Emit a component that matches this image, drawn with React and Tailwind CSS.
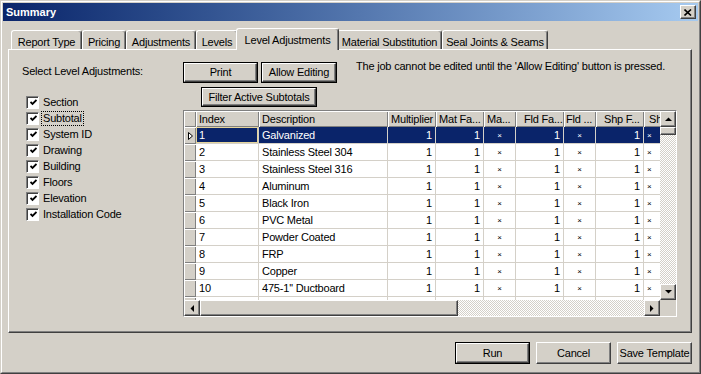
import React from "react";

const raised =
  "border border-t-white border-l-white border-r-[#404040] border-b-[#404040] shadow-[inset_-1px_-1px_0_0_#808080]";
const dither =
  "bg-[repeating-conic-gradient(#ffffff_0%_25%,#d4d0c8_0%_50%)] bg-[length:2px_2px]";

const tabs = [
  { label: "Report Type", w: "w-[71px]" },
  { label: "Pricing", w: "w-[44px]" },
  { label: "Adjustments", w: "w-[70px]" },
  { label: "Levels", w: "w-[42px]" },
  { label: "Level Adjustments", w: "w-[103px]", active: true },
  { label: "Material Substitution", w: "w-[105px]" },
  { label: "Seal Joints & Seams", w: "w-[106px]" },
];

const levels = ["Section", "Subtotal", "System ID", "Drawing", "Building", "Floors", "Elevation", "Installation Code"];

const cols = [
  { label: "Index", w: "w-[63px]", head: "pl-[3px]", cell: "justify-start pl-[3px]" },
  { label: "Description", w: "w-[129px]", head: "pl-[3px]", cell: "justify-start pl-[3px]" },
  { label: "Multiplier", w: "w-[48px]", head: "pl-[3px]", cell: "justify-end pr-[3px]" },
  { label: "Mat Fa...", w: "w-[48px]", head: "pl-[3px]", cell: "justify-end pr-[3px]" },
  { label: "Ma...", w: "w-[32px]", head: "pl-[3px]", cell: "justify-center" },
  { label: "Fld Fa...", w: "w-[48px]", head: "pl-[8px]", cell: "justify-end pr-[3px]" },
  { label: "Fld ...", w: "w-[32px]", head: "pl-[2px]", cell: "justify-center" },
  { label: "Shp F...", w: "w-[48px]", head: "pl-[8px]", cell: "justify-end pr-[3px]" },
  { label: "Sh...", w: "w-[48px]", head: "pl-[5px]", cell: "justify-start pl-[3px]" },
];

const rows = [
  ["1", "Galvanized"],
  ["2", "Stainless Steel 304"],
  ["3", "Stainless Steel 316"],
  ["4", "Aluminum"],
  ["5", "Black Iron"],
  ["6", "PVC Metal"],
  ["7", "Powder Coated"],
  ["8", "FRP"],
  ["9", "Copper"],
  ["10", "475-1'' Ductboard"],
  ["", ""],
];

function Arrow({ dir }) {
  const pts = {
    up: "0,4 3.5,0.5 7,4",
    down: "0,0 7,0 3.5,3.5",
    left: "4,0 4,7 0.5,3.5",
    right: "0,0 0,7 3.5,3.5",
  }[dir];
  const size = dir === "up" || dir === "down" ? { width: 7, height: 4 } : { width: 4, height: 7 };
  return (
    <svg {...size} viewBox={`0 0 ${size.width} ${size.height}`}>
      <polygon points={pts} fill="#000" />
    </svg>
  );
}

function ScrollBtn({ dir }) {
  return (
    <div className={`w-[16px] h-[16px] shrink-0 flex items-center justify-center bg-[#d4d0c8] ${raised}`}>
      <Arrow dir={dir} />
    </div>
  );
}

function Checkbox() {
  return (
    <div className="w-[13px] h-[13px] shrink-0 bg-white border border-t-[#808080] border-l-[#808080] border-r-white border-b-white shadow-[inset_1px_1px_0_0_#404040] flex items-center justify-center">
      <svg width="7" height="7" viewBox="0 0 7 7" className="ml-px mt-px">
        <polyline points="0.5,3 2.5,5 6.5,1" fill="none" stroke="#000" strokeWidth="1.8" />
      </svg>
    </div>
  );
}

function Button({ label, w, h, def }) {
  return (
    <div className={`${w} ${h} shrink-0 ${def ? "border border-black" : ""}`}>
      <div className={`w-full h-full bg-[#d4d0c8] flex items-center justify-center whitespace-nowrap overflow-hidden ${raised}`}>
        {label}
      </div>
    </div>
  );
}

function cellValue(i, row) {
  if (i === 0) return row[0];
  if (i === 1) return row[1];
  if (!row[0]) return "";
  return i === 4 || i === 6 || i === 8 ? "×" : "1";
}

export default function App() {
  return (
    <div className="w-[701px] h-[374px] overflow-hidden bg-[#d4d0c8] text-[11px] tracking-[-0.2px] text-black font-['Liberation_Sans',Arial,sans-serif] border border-t-[#d4d0c8] border-l-[#d4d0c8] border-r-[#404040] border-b-[#404040]">
      <div className="h-full border border-t-white border-l-white border-r-[#808080] border-b-[#808080] p-px flex flex-col">
        <div className="h-[18px] shrink-0 flex items-center justify-between pl-[3px] pr-[2px] bg-gradient-to-r from-[#0a246a] to-[#a6caf0]">
          <span className="text-white font-bold text-[11px] tracking-normal">Summary</span>
          <div className={`w-[16px] h-[14px] bg-[#d4d0c8] flex items-center justify-center ${raised}`}>
            <svg width="8" height="7" viewBox="0 0 8 7">
              <path d="M0.5 0.5 L7 6.5 M7 0.5 L0.5 6.5" stroke="#000" strokeWidth="1.6" />
            </svg>
          </div>
        </div>

        <div className="ml-[5px] w-[684px] mt-[7px] flex flex-col">
          <div className="h-[21px] flex items-end pl-[3px]">
            {tabs.map((t) =>
              t.active ? (
                <div
                  key={t.label}
                  className={`${t.w} h-[22px] -mx-[2px] -mb-px relative z-10 shrink-0 bg-[#d4d0c8] flex justify-center pt-[3px] border-t border-l border-r border-t-white border-l-white border-r-[#404040] rounded-t-[3px] shadow-[inset_-1px_0_0_0_#808080]`}
                >
                  {t.label}
                </div>
              ) : (
                <div
                  key={t.label}
                  className={`${t.w} h-[19px] shrink-0 bg-[#d4d0c8] flex justify-center pt-[3px] whitespace-nowrap overflow-hidden border-t border-l border-r border-t-white border-l-white border-r-[#404040] rounded-t-[3px] shadow-[inset_-1px_0_0_0_#808080]`}
                >
                  {t.label}
                </div>
              )
            )}
          </div>

          <div className={`h-[284px] flex ${raised}`}>
            <div className="w-[174px] shrink-0 pl-[13px] pt-[15px]">
              <div className="leading-[13px]">Select Level Adjustments:</div>
              <div className="mt-[16px] ml-[4px] flex flex-col">
                {levels.map((l) => (
                  <div key={l} className="h-[16px] flex items-center gap-[2px]">
                    <Checkbox />
                    <span className={`leading-[13px] px-px ${l === "Subtotal" ? "border border-dotted border-black" : "border border-transparent"}`}>
                      {l}
                    </span>
                  </div>
                ))}
              </div>
            </div>

            <div className="flex-1 pt-[12px] flex flex-col">
              <div className="flex items-start">
                <Button label="Print" w="w-[75px]" h="h-[21px]" def />
                <div className="ml-[3px]">
                  <Button label="Allow Editing" w="w-[76px]" h="h-[21px]" def />
                </div>
                <div className="ml-[19px] -mt-[2px] leading-[13px] whitespace-nowrap">
                  The job cannot be edited until the 'Allow Editing' button is pressed.
                </div>
              </div>
              <div className="mt-[4px] ml-[18px]">
                <Button label="Filter Active Subtotals" w="w-[116px]" h="h-[20px]" def />
              </div>

              <div className="mt-[3px] w-[494px] h-[207px] border border-t-[#808080] border-l-[#808080] border-r-white border-b-white bg-[#d4d0c8] flex">
                <div className="w-[476px] flex flex-col">
                  <div className="h-[189px] overflow-hidden bg-white">
                    <div className="h-[16px] flex w-max">
                      <div className="w-[12px] h-[16px] bg-[#d4d0c8] shadow-[inset_1px_1px_0_0_#ffffff,inset_-1px_-1px_0_0_#808080]" />
                      {cols.map((c) => (
                        <div
                          key={c.label}
                          className={`${c.w} ${c.head} h-[16px] bg-[#d4d0c8] flex items-center pt-px whitespace-nowrap overflow-hidden shadow-[inset_1px_1px_0_0_#ffffff,inset_-1px_-1px_0_0_#808080]`}
                        >
                          {c.label}
                        </div>
                      ))}
                    </div>
                    {rows.map((r, ri) => {
                      const sel = ri === 0;
                      return (
                        <div key={ri} className="h-[17px] flex w-max">
                          <div className="w-[12px] h-[17px] bg-[#d4d0c8] flex items-center justify-center shadow-[inset_1px_1px_0_0_#ffffff,inset_-1px_-1px_0_0_#808080]">
                            {sel && (
                              <svg width="5" height="8" viewBox="0 0 5 8">
                                <polygon points="0.5,0.5 4.5,4 0.5,7.5" fill="#ffffff" stroke="#000" strokeWidth="1" />
                              </svg>
                            )}
                          </div>
                          {cols.map((c, ci) => (
                            <div
                              key={c.label}
                              className={`${c.w} ${c.cell} h-[17px] flex items-center pt-px whitespace-nowrap overflow-hidden border-r border-b border-[#d4d0c8] ${
                                sel ? "bg-[#0a246a] text-white" : "bg-white"
                              } ${sel && ci === 0 ? "shadow-[inset_0_0_0_1px_#e4d49c]" : ""} ${
                                ci === 4 || ci === 6 || ci === 8 ? "text-[8px]" : ""
                              }`}
                            >
                              {cellValue(ci, r)}
                            </div>
                          ))}
                        </div>
                      );
                    })}
                  </div>
                  <div className="h-[16px] flex">
                    <ScrollBtn dir="left" />
                    <div className={`w-[258px] h-[16px] bg-[#d4d0c8] ${raised}`} />
                    <div className={`flex-1 h-[16px] ${dither}`} />
                    <ScrollBtn dir="right" />
                  </div>
                </div>
                <div className="w-[16px] flex flex-col">
                  <ScrollBtn dir="up" />
                  <div className={`h-[8px] bg-[#d4d0c8] ${raised}`} />
                  <div className={`h-[149px] ${dither}`} />
                  <ScrollBtn dir="down" />
                  <div className="h-[16px] bg-[#d4d0c8]" />
                </div>
              </div>
            </div>
          </div>

          <div className="mt-[9px] flex justify-end gap-[6px]">
            <Button label="Run" w="w-[75px]" h="h-[22px]" def />
            <Button label="Cancel" w="w-[75px]" h="h-[22px]" />
            <Button label="Save Template" w="w-[75px]" h="h-[22px]" />
          </div>
        </div>
      </div>
    </div>
  );
}
